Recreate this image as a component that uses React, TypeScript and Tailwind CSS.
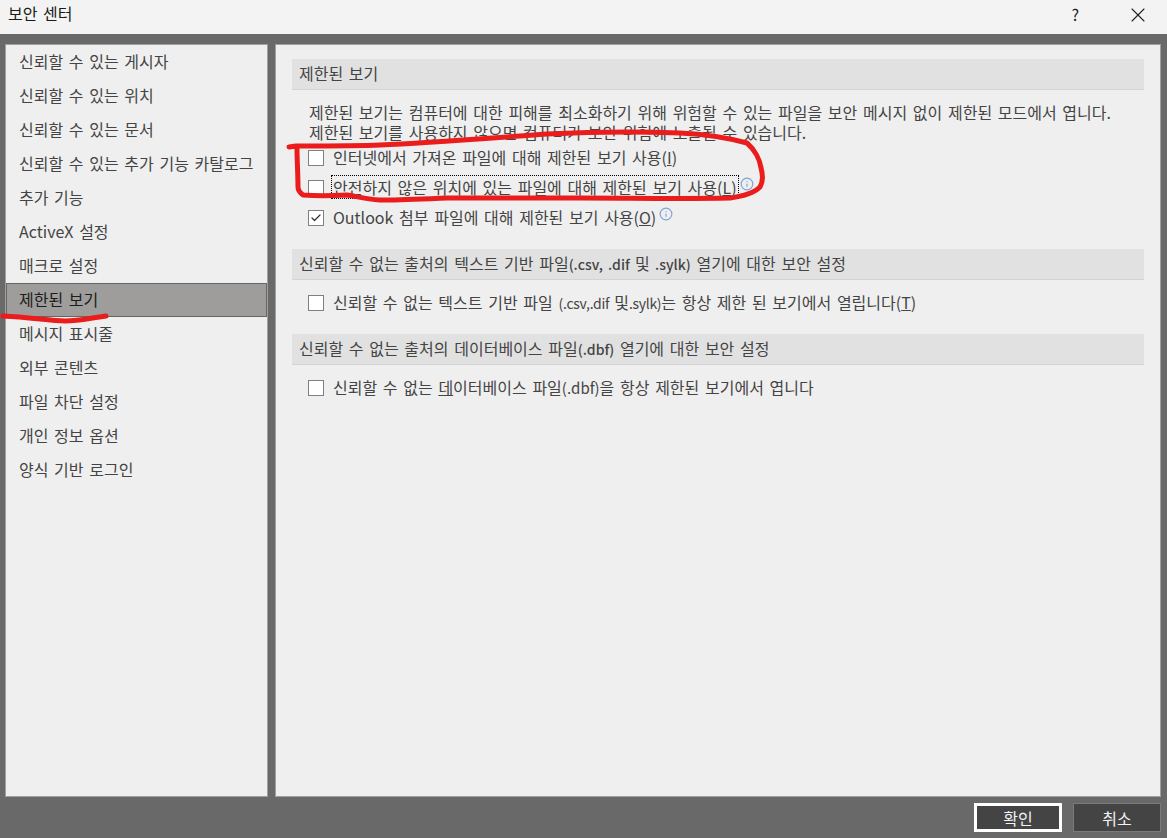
import { Check, Info, X } from "lucide-react";

const navItems = [
  "신뢰할 수 있는 게시자",
  "신뢰할 수 있는 위치",
  "신뢰할 수 있는 문서",
  "신뢰할 수 있는 추가 기능 카탈로그",
  "추가 기능",
  "ActiveX 설정",
  "매크로 설정",
  "제한된 보기",
  "메시지 표시줄",
  "외부 콘텐츠",
  "파일 차단 설정",
  "개인 정보 옵션",
  "양식 기반 로그인",
];

function SectionHeader({ children }: { children: React.ReactNode }) {
  return (
    <div className="h-[31px] bg-[#e1e1e1] border-b border-[#d4d4d4] pl-[7px] pb-[2px] flex items-center whitespace-pre text-[#444444]">
      {children}
    </div>
  );
}

function Option({ label, checked, focused, info }: { label: React.ReactNode; checked?: boolean; focused?: boolean; info?: boolean }) {
  return (
    <div className="h-[30px] pl-4 flex items-center">
      <span className="w-[16px] h-[16px] shrink-0 bg-white border border-[#7f7f7f] flex items-center justify-center">
        {checked && <Check size={12} strokeWidth={2.5} className="text-[#333333]" />}
      </span>
      <span className={`ml-[7px] -mt-[2px] px-[1px] leading-[22px] text-[#444444] ${focused ? "border border-dotted border-black" : "border border-transparent"}`}>
        {label}
      </span>
      {info && <Info size={14} strokeWidth={2} className="text-[#7fa3d6] ml-[1px] -mt-[8px]" />}
    </div>
  );
}

export default function App() {
  return (
    <div
      className="relative w-[1167px] h-[838px] overflow-hidden bg-[#696969] flex flex-col text-[16px] [word-spacing:2.1px]"
      style={{ fontFamily: '"Noto Sans CJK KR", "Noto Sans", sans-serif' }}
    >
      {/* title bar */}
      <div className="h-[34px] shrink-0 bg-[#f3f3f3] flex items-center pl-2 text-[#1a1a1a]">
        <span className="-mt-[8px]">보안 센터</span>
        <span className="ml-auto mr-[47px] -mt-[6px]">?</span>
        <X size={24} strokeWidth={1.1} className="mr-[17px] -mt-[4px] text-[#222222]" />
      </div>

      <div className="flex-1 flex gap-[7px] pt-[10px] pl-[5px] pr-[6px]">
        {/* left nav */}
        <div className="w-[263px] bg-[#efefef] border border-[#a0a0a0]">
          {navItems.map((item) =>
            item === "제한된 보기" ? (
              <div key={item} className="h-[34px] pl-[12px] pb-[2px] flex items-center bg-[#9e9d9b] border border-[#666666] text-[#1c1c1c]">
                {item}
              </div>
            ) : (
              <div key={item} className="h-[34px] pl-[12px] pb-[2px] flex items-center text-[#444444] border border-transparent">
                {item}
              </div>
            )
          )}
        </div>

        {/* right content */}
        <div className="flex-1 bg-[#efefef] border border-[#a0a0a0] pt-[14px] pl-4 pr-4">
          <SectionHeader>제한된 보기</SectionHeader>
          <div className="pl-[17px] pt-[12px] leading-[20px] text-[#444444]">
            <p>제한된 보기는 컴퓨터에 대한 피해를 최소화하기 위해 위험할 수 있는 파일을 보안 메시지 없이 제한된 모드에서 엽니다.</p>
            <p>제한된 보기를 사용하지 않으면 컴퓨터가 보안 위험에 노출될 수 있습니다.</p>
          </div>
          <div className="mt-[1px]">
            <Option label={<>인터넷에서 가져온 파일에 대해 제한된 보기 사용(<u>I</u>)</>} />
            <Option focused info label={<>안전하지 않은 위치에 있는 파일에 대해 제한된 보기 사용(<u>L</u>)</>} />
            <Option checked info label={<>Outlook 첨부 파일에 대해 제한된 보기 사용(<u>O</u>)</>} />
          </div>

          <div className="mt-[16px]">
            <SectionHeader>
              <span>신뢰할 수 없는 출처의 텍스트 기반 파일<span className="text-[14px] font-medium">(.csv, .dif </span>및<span className="text-[14px] font-medium"> .sylk)</span> 열기에 대한 보안 설정</span>
            </SectionHeader>
          </div>
          <div className="mt-[8px]">
            <Option label={<>신뢰할 수 없는 텍스트 기반 파일 <span className="text-[14px] tracking-[-0.3px]">(.csv,.dif </span>및<span className="text-[14px] tracking-[-0.3px]">.sylk)</span>는 항상 제한 된 보기에서 열립니다(<u>T</u>)</>} />
          </div>

          <div className="mt-[16px]">
            <SectionHeader>
              <span>신뢰할 수 없는 출처의 데이터베이스 파일<span className="text-[14px] font-medium">(.dbf)</span> 열기에 대한 보안 설정</span>
            </SectionHeader>
          </div>
          <div className="mt-[8px]">
            <Option label={<>신뢰할 수 없는 <u>데</u>이터베이스 파일<span className="text-[15px]">(.dbf)</span>을 항상 제한된 보기에서 엽니다</>} />
          </div>
        </div>
      </div>

      {/* footer */}
      <div className="h-[41px] shrink-0 flex items-start justify-end gap-[11px] pt-[6px] pr-[6px]">
        <button className="w-[88px] h-[29px] bg-[#444444] border-[3px] border-white text-[#f2f2f2] flex items-center justify-center">확인</button>
        <button className="w-[88px] h-[29px] bg-[#444444] border border-[#7a7a7a] text-[#f2f2f2] flex items-center justify-center">취소</button>
      </div>

      {/* red pen marks drawn over the screenshot */}
      <svg className="absolute inset-0 pointer-events-none" width="1167" height="838" fill="none" stroke="#ea1c1c" strokeWidth="5" strokeLinecap="round" strokeLinejoin="round">
        <path d="M289 147 L296 146 C330 146 360 146 380 145 C430 143 490 138 547 134 C590 132 650 132 680 133 C700 134 725 137 747 143 C755 150 760 160 761 168 C763 175 763 182 760 187 C755 192 745 196 730 198 C680 199 630 198 580 198 C530 198 490 198 447 198 C420 199 400 200 380 200 C365 199 355 196 347 195 C330 196 315 196 303 195 C299 192 298 190 298 187 C298 175 297 160 297 149" />
        <path d="M3 316 C30 317 50 321 65 321 C80 321 90 318 106 316" />
      </svg>
    </div>
  );
}
